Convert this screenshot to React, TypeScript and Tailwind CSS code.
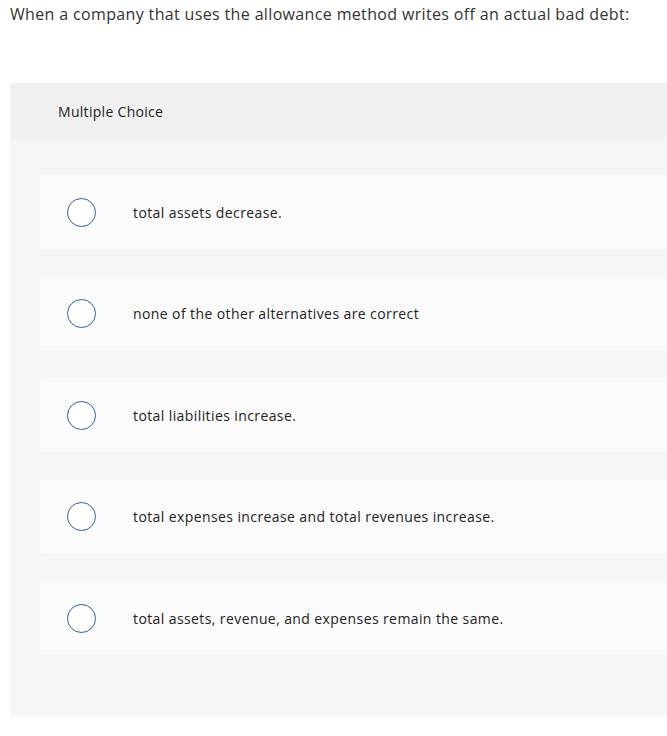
import React from 'react';

const OPTIONS = [
    'total assets decrease.',
    'none of the other alternatives are correct',
    'total liabilities increase.',
    'total expenses increase and total revenues increase.',
    'total assets, revenue, and expenses remain the same.',
];

const Radio: React.FC = () => (
    <span className="block w-[29px] h-[29px] rounded-full border-[1.5px] border-[#2f5f9c] bg-white shrink-0" />
);

export default function App() {
    return (
        <div
            className="w-[667px] h-[736px] overflow-hidden bg-white text-[#222]"
            style={{ fontFamily: '"Open Sans", Arial, sans-serif' }}
        >
            {/* Question */}
            <p className="pl-[10px] pt-[3px] text-[16px] leading-[22px] tracking-[0.35px] text-[#333]">
                When a company that uses the allowance method writes off an actual bad debt:
            </p>

            {/* Answer panel */}
            <div className="ml-[10px] mt-[58px] w-[700px] rounded-[3px] bg-[#f5f5f5]">
                <div className="h-[56px] flex items-center pl-[48px] bg-[#f0f0f0] rounded-t-[3px] text-[14px] tracking-[0.3px] text-[#222]">
                    Multiple Choice
                </div>
                <div className="pl-[30px] pt-[36px] pb-[61px] flex flex-col gap-[27.5px]">
                    {OPTIONS.map(option => (
                        <div
                            key={option}
                            className="h-[74px] flex items-center pl-[27px] rounded-[3px] bg-[#fafafa]"
                        >
                            <Radio />
                            <span className="ml-[37px] text-[14px] tracking-[0.4px] text-[#222]">{option}</span>
                        </div>
                    ))}
                </div>
            </div>
        </div>
    );
}
